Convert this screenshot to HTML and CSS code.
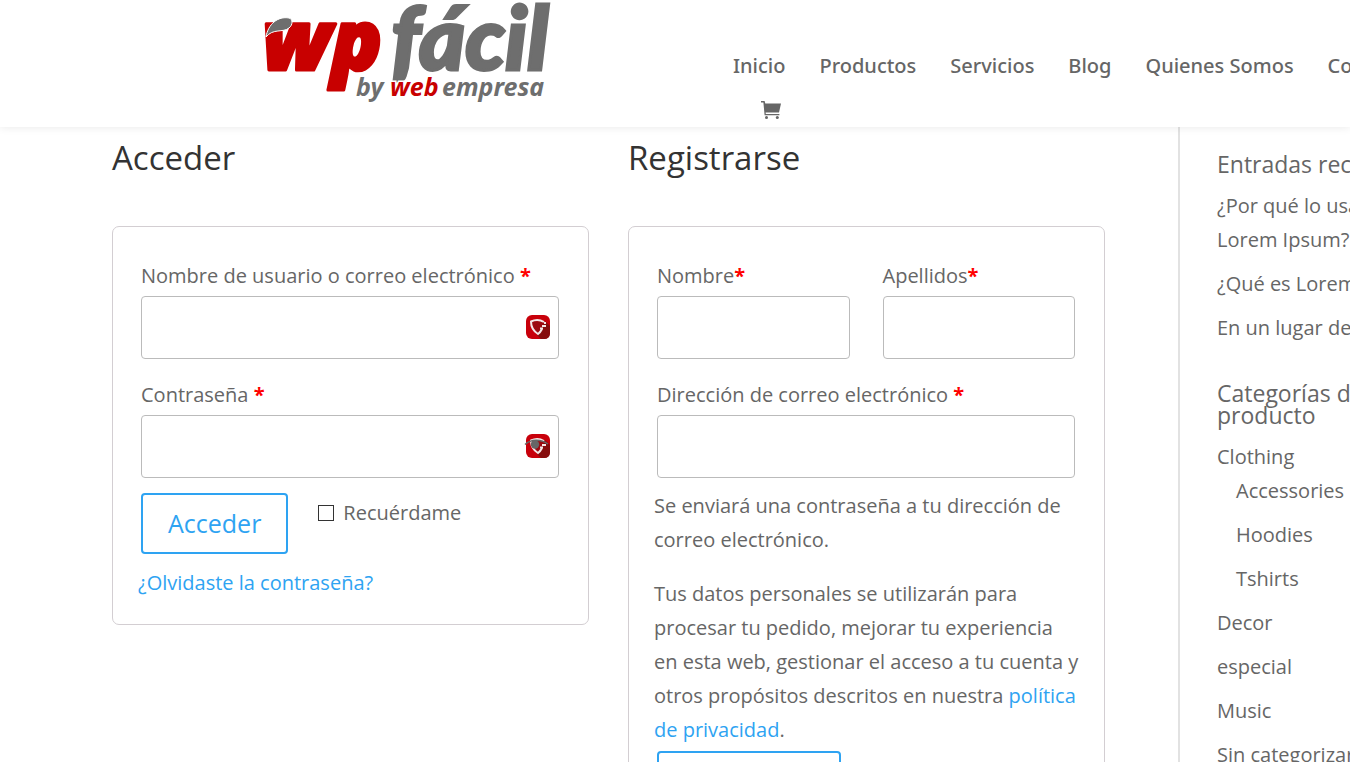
FILE: index.html
```html
<!DOCTYPE html>
<html lang="es">
<head>
    <meta charset="UTF-8">
    <meta name="viewport" content="width=device-width, initial-scale=1.0">
    <title>Mi cuenta - wpfácil</title>
    <link rel="stylesheet" href="styles.css">
</head>
<body>
    <header class="main-header">
        <a href="#" class="logo" aria-label="wpfácil by webempresa">
            <svg width="300" height="104" viewBox="0 0 300 104">
                <text class="logo-wp" x="1" y="70">wp</text>
                <text class="logo-facil" x="130" y="70">fácil</text>
                <path class="logo-gray logo-leaf" d="M5 37 C7 24 17 16 28 18 C32 19 32 25 28 28 C22 33 12 28 5 37 Z"/>
                <g class="logo-sub">
                    <text class="logo-gray" x="95" y="96">by</text>
                    <text class="logo-red" x="129" y="96">web</text>
                    <text class="logo-gray" x="181" y="96">empresa</text>
                </g>
            </svg>
        </a>
        <nav class="main-nav">
            <ul class="menu">
                <li><a href="#">Inicio</a></li>
                <li><a href="#">Productos</a></li>
                <li><a href="#">Servicios</a></li>
                <li><a href="#">Blog</a></li>
                <li><a href="#">Quienes Somos</a></li>
                <li><a href="#">Contacto</a></li>
            </ul>
            <a href="#" class="cart" aria-label="Carrito">
                <svg width="20" height="18" viewBox="0 0 20 18">
                    <path d="M0 0h3.600l.7 2.600H20l-2 8.900H4.600l.2 1.500h13.600v1.200H3.600L2.400 1.400H0z"/>
                    <circle cx="5.500" cy="16.500" r="1.500"/>
                    <circle cx="16.300" cy="16.500" r="1.500"/>
                </svg>
            </a>
        </nav>
    </header>

    <div class="container">
        <main class="account">
            <section class="column">
                <h2>Acceder</h2>
                <form class="card">
                    <div class="field">
                        <label for="username">Nombre de usuario o correo electrónico <span class="required">*</span></label>
                        <div class="input-wrap">
                            <input type="text" id="username" class="input-field">
                            <svg class="key-icon" width="24" height="24" viewBox="0 0 24 24">
                                <rect width="24" height="24" rx="6" fill="#c8000b"/>
                                <path d="M19 6l5 5v7q0 6-6 6h-3l-4-4z" fill="#860d0d"/>
                                <path d="M18 7C14 4.500 9 4.500 5 6.500C5 12 8 16.500 12 19C14 17.500 15 16 16 14" fill="#9c0a10" stroke="#f4e8e8" stroke-width="2"/>
                                <path d="M16 11h4M14 13.500h3M19 7v2" stroke="#f4e8e8" stroke-width="2"/>
                            </svg>
                        </div>
                    </div>
                    <div class="field">
                        <label for="password">Contraseña <span class="required">*</span></label>
                        <div class="input-wrap">
                            <input type="password" id="password" class="input-field">
                            <svg class="key-icon" width="24" height="24" viewBox="0 0 24 24">
                                <rect width="24" height="24" rx="6" fill="#c8000b"/>
                                <path d="M19 6l5 5v7q0 6-6 6h-3l-4-4z" fill="#860d0d"/>
                                <path d="M18 7C14 4.500 9 4.500 5 6.500C5 12 8 16.500 12 19C14 17.500 15 16 16 14" fill="#9c0a10" stroke="#f4e8e8" stroke-width="2"/>
                                <path d="M16 11h4M14 13.500h3" stroke="#f4e8e8" stroke-width="2"/>
                                <path d="M-1 10.500C5 5 15 5 22 10" fill="none" stroke="#666" stroke-width="1.500"/>
                                <circle cx="9" cy="10.500" r="4.200" fill="#666"/>
                            </svg>
                        </div>
                    </div>
                    <div class="actions">
                        <button type="submit" class="btn">Acceder</button>
                        <label class="remember" for="rememberme"><input type="checkbox" id="rememberme">Recuérdame</label>
                    </div>
                    <p class="lost-password"><a href="#">¿Olvidaste la contraseña?</a></p>
                </form>
            </section>

            <section class="column">
                <h2>Registrarse</h2>
                <form class="card">
                    <div class="field-row">
                        <div class="field">
                            <label for="firstName">Nombre<span class="required">*</span></label>
                            <input type="text" id="firstName" class="input-field">
                        </div>
                        <div class="field">
                            <label for="lastName">Apellidos<span class="required">*</span></label>
                            <input type="text" id="lastName" class="input-field">
                        </div>
                    </div>
                    <div class="field">
                        <label for="email">Dirección de correo electrónico <span class="required">*</span></label>
                        <input type="email" id="email" class="input-field">
                    </div>
                    <div class="notice">
                        <p>Se enviará una contraseña a tu dirección de correo electrónico.</p>
                        <p>Tus datos personales se utilizarán para procesar tu pedido, mejorar tu experiencia en esta web, gestionar el acceso a tu cuenta y otros propósitos descritos en nuestra <a href="#">política de privacidad</a>.</p>
                    </div>
                    <button type="submit" class="btn btn-register">Registrarse</button>
                </form>
            </section>
        </main>

        <aside class="sidebar">
            <h4>Entradas recientes</h4>
            <ul>
                <li><a href="#">¿Por qué lo usamos?<br>Lorem Ipsum?</a></li>
                <li><a href="#">¿Qué es Lorem Ipsum?</a></li>
                <li><a href="#">En un lugar de la Mancha</a></li>
            </ul>
            <h4>Categorías de<br>producto</h4>
            <ul>
                <li>
                    <a href="#">Clothing</a>
                    <ul class="children">
                        <li><a href="#">Accessories</a></li>
                        <li><a href="#">Hoodies</a></li>
                        <li><a href="#">Tshirts</a></li>
                    </ul>
                </li>
                <li><a href="#">Decor</a></li>
                <li><a href="#">especial</a></li>
                <li><a href="#">Music</a></li>
                <li><a href="#">Sin categorizar</a></li>
            </ul>
        </aside>
    </div>
</body>
</html>
```

FILE: styles.css
```css
* {
    margin: 0;
    padding: 0;
    box-sizing: border-box;
}

body {
    font-family: 'Open Sans', Arial, sans-serif;
    font-size: 20px;
    line-height: 34px;
    color: #666;
    background-color: #fff;
    height: 100vh;
    overflow: hidden;
}

a {
    color: #2ea3f2;
    text-decoration: none;
}

ul {
    list-style: none;
}

/* Header */
.main-header {
    position: relative;
    display: flex;
    height: 127px;
    padding-left: 261px;
    gap: 172px;
    background-color: #fff;
    box-shadow: 0 1px 8px rgba(0, 0, 0, 0.08);
}

.logo {
    flex: none;
    height: 104px;
}

.logo svg {
    display: block;
    overflow: visible;
}

.logo-wp {
    fill: #c80000;
    stroke: #c80000;
    stroke-width: 3;
    stroke-linejoin: round;
    font-size: 84px;
    font-weight: 800;
    font-style: italic;
}

.logo-facil {
    fill: #6e6e6e;
    stroke: #6e6e6e;
    stroke-width: 3;
    font-family: Lato, sans-serif;
    font-size: 88px;
    font-weight: 900;
    font-style: italic;
}

.logo-sub {
    font-family: 'Noto Sans', sans-serif;
    font-size: 25px;
    font-weight: 700;
    font-style: italic;
}

.logo-sub text {
    paint-order: stroke;
    stroke: #fff;
    stroke-width: 3;
}

.logo-red {
    fill: #c80000;
}

.logo-gray {
    fill: #6e6e6e;
}

.logo-leaf {
    stroke: #fff;
    stroke-width: 1;
}

.main-nav {
    flex: 1;
    min-width: 0;
    padding-top: 49px;
    overflow: hidden;
}

.menu {
    display: flex;
    gap: 34px;
    font-family: 'Noto Sans', sans-serif;
    font-weight: 500;
    white-space: nowrap;
}

.menu a {
    color: #666;
}

.cart {
    display: block;
    margin: 18px 0 0 28px;
}

.cart svg {
    display: block;
    fill: #666;
}

/* Content */
.container {
    display: flex;
    padding-left: 112px;
}

.account {
    flex: 1;
    display: flex;
    align-items: flex-start;
    gap: 39px;
    padding-right: 73px;
}

.column {
    flex: 1;
    min-width: 0;
}

h2 {
    padding: 14px 0 51px;
    font-size: 33px;
    font-weight: 400;
    line-height: 34px;
    color: #333;
}

.card {
    padding: 32px 25px 24px;
    border: 1px solid #d3ced2;
    border-radius: 7px;
}

.field {
    flex: 1;
    min-width: 0;
    padding: 0 4px 0 3px;
    margin-bottom: 19px;
}

.field label {
    display: block;
    margin-bottom: 3px;
}

.field-row {
    display: flex;
    gap: 26px;
}

.required {
    color: red;
    font-weight: 700;
}

.input-wrap {
    position: relative;
}

.input-field {
    display: block;
    width: 100%;
    height: 63px;
    padding: 15px;
    border: 1px solid #bbb;
    border-radius: 4px;
    background-color: #fff;
    color: #4e4e4e;
    font-size: 20px;
}

.key-icon {
    position: absolute;
    top: 19px;
    right: 9px;
    overflow: visible;
}

.actions {
    display: flex;
    align-items: flex-start;
    gap: 30px;
    margin-top: -4px;
    padding-left: 3px;
}

.btn {
    height: 61px;
    padding: 0 25px 2px;
    border: 2px solid #2ea3f2;
    border-radius: 4px;
    background-color: transparent;
    color: #2ea3f2;
    font-family: inherit;
    font-size: 25px;
    cursor: pointer;
}

.btn-register {
    margin: 4px 0 0 3px;
}

.remember {
    display: flex;
    align-items: center;
    gap: 9px;
    padding-top: 3px;
}

.remember input {
    appearance: none;
    width: 16px;
    height: 16px;
    border: 1px solid #333;
    background-color: #fff;
}

.lost-password {
    margin-top: 12px;
}

.notice {
    margin-top: -8px;
}

.notice p + p {
    margin-top: 20px;
}

/* Sidebar */
.sidebar {
    flex: none;
    width: 172px;
    padding: 26px 0 0 37px;
    border-left: 2px solid #e2e2e2;
    overflow: hidden;
    white-space: nowrap;
}

.sidebar h4 {
    padding-bottom: 14px;
    font-size: 23px;
    font-weight: 400;
    line-height: 22px;
}

.sidebar a {
    display: block;
    color: #666;
}

.sidebar li + li {
    margin-top: 10px;
}

.sidebar ul + h4 {
    margin-top: 37px;
}

.children {
    padding-left: 19px;
}
```
